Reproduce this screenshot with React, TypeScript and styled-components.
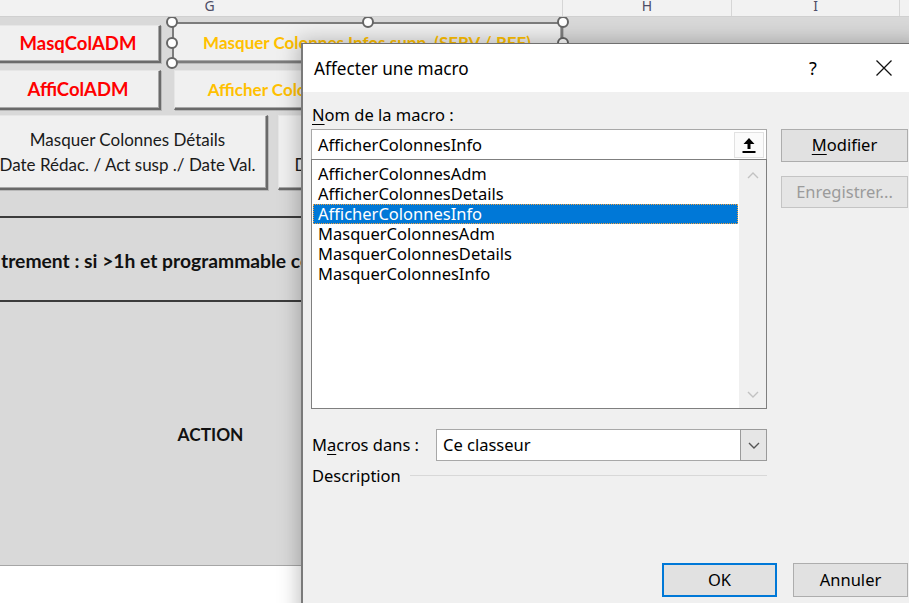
import React from "react";
import styled, { createGlobalStyle } from "styled-components";

const Global = createGlobalStyle`
  html, body { margin: 0; padding: 0; }
  body { width: 909px; height: 603px; overflow: hidden; background: #fff; }
  * { box-sizing: border-box; }
`;

const Screen = styled.div`
  position: relative;
  width: 909px;
  height: 603px;
  overflow: hidden;
  background: #fff;
`;

/* ---------- Spreadsheet ---------- */

const Sheet = styled.div`
  display: flex;
  flex-direction: column;
  width: 909px;
  font-family: Lato, "Liberation Sans", sans-serif;
`;

const ColumnHeader = styled.div`
  display: flex;
  height: 17px;
  background: #f2f2f2;
  border-bottom: 1px solid #d0d0d0;
  overflow: hidden;
`;

const ColHead = styled.div<{ $w: number; $shift?: number }>`
  flex: 0 0 ${(p) => p.$w}px;
  border-right: 1px solid #d6d6d6;
  text-align: center;
  padding-right: ${(p) => p.$shift ?? 0}px;
  font-family: "Noto Sans", sans-serif;
  font-size: 14px;
  line-height: 11px;
  color: #4d4d66;
`;

const ButtonArea = styled.div`
  display: flex;
  flex-direction: column;
  height: 201px;
  padding-top: 5px;
  background: #d9d9d9;
  border-bottom: 2px solid #3c3c3c;
  overflow: hidden;
`;

const ButtonRow = styled.div<{ $h: number; $mt?: number }>`
  display: flex;
  align-items: stretch;
  height: ${(p) => p.$h}px;
  margin-top: ${(p) => p.$mt ?? 0}px;
`;

const FormButton = styled.div<{
  $w: number;
  $ml?: number;
  $mt?: number;
  $color?: string;
  $bold?: boolean;
  $size?: number;
}>`
  flex: 0 0 ${(p) => p.$w}px;
  margin-left: ${(p) => p.$ml ?? 0}px;
  margin-top: ${(p) => p.$mt ?? 0}px;
  display: flex;
  align-items: center;
  justify-content: center;
  text-align: center;
  white-space: nowrap;
  background: #f0f0f0;
  border-top: 1px solid #e6e6e6;
  border-left: 1px solid #e6e6e6;
  border-right: 2px solid #6a6a6a;
  border-bottom: 2px solid #6a6a6a;
  box-shadow: inset -1px -1px 0 #a8a8a8, 1px 1px 0 #b8b8b8;
  color: ${(p) => p.$color ?? "#1a1a1a"};
  font-weight: ${(p) => (p.$bold ? 700 : 400)};
  font-size: ${(p) => p.$size ?? 17}px;
  line-height: 25px;
`;

const Selection = styled.div<{ $w: number; $ml: number }>`
  position: relative;
  flex: 0 0 ${(p) => p.$w}px;
  margin-left: ${(p) => p.$ml}px;
  display: flex;
`;

const SelectionFrame = styled.div`
  position: absolute;
  inset: 0;
  border: 2px solid #7c7c7c;
  pointer-events: none;
`;

const Handle = styled.span<{ $x: string; $y: string }>`
  position: absolute;
  left: ${(p) => p.$x};
  top: ${(p) => p.$y};
  width: 12px;
  height: 12px;
  margin: -6px 0 0 -6px;
  border-radius: 50%;
  background: #fff;
  border: 2px solid #666;
`;

const TextRow = styled.div`
  height: 84px;
  background: #d9d9d9;
  border-bottom: 2px solid #3c3c3c;
  display: flex;
  align-items: center;
  padding-left: 1px;
  padding-top: 3px;
  white-space: nowrap;
  overflow: hidden;
  font-weight: 700;
  font-size: 19.3px;
  color: #111;
`;

const ActionRow = styled.div`
  height: 264px;
  background: #d9d9d9;
  border-bottom: 1px solid #a6a6a6;
  display: flex;
  align-items: center;
`;

const ActionCell = styled.div`
  flex: 0 0 421px;
  text-align: center;
  padding-top: 2px;
  font-weight: 700;
  font-size: 17.3px;
  color: #111;
`;

/* ---------- Dialog ---------- */

const Dialog = styled.div`
  position: absolute;
  left: 301px;
  top: 43px;
  width: 620px;
  height: 600px;
  background: #f0f0f0;
  border: 1px solid #707070;
  border-left: 2px solid #7a7a7a;
  box-shadow: 0 0 20px 2px rgba(0, 0, 0, 0.26);
  font-family: "Noto Sans", "Open Sans", sans-serif;
  font-size: 16.5px;
  color: #000;
  display: flex;
  flex-direction: column;
`;

const TitleBar = styled.div`
  height: 48px;
  background: #fff;
  display: flex;
  align-items: center;
  padding-left: 11px;
  padding-right: 13px;
`;

const Title = styled.div`
  flex: 1;
  font-size: 17.2px;
  padding-top: 1px;
`;

const TitleBtn = styled.div`
  width: 46px;
  height: 32px;
  display: flex;
  align-items: center;
  justify-content: center;
  font-size: 18px;
  margin-left: 25px;
`;

const HelpBtn = styled(TitleBtn)`
  padding-left: 0;
`;

const Body = styled.div`
  display: flex;
  flex-direction: column;
  padding: 12px 12px 0 8px;
`;

const MainGrid = styled.div`
  display: grid;
  grid-template-columns: 456px 127px;
  column-gap: 14px;
  align-items: start;
`;

const LeftCol = styled.div`
  display: flex;
  flex-direction: column;
`;

const RightCol = styled.div`
  display: flex;
  flex-direction: column;
  padding-top: 25px;
  gap: 14px;
`;

const Label = styled.div`
  height: 22px;
  line-height: 22px;
  padding-left: 1px;
  margin-bottom: 3px;
  white-space: nowrap;
`;

const Key = styled.span`
  text-decoration: underline;
  text-underline-offset: 3px;
`;

const NameInput = styled.div`
  position: relative;
  height: 30px;
  background: #fff;
  border: 1px solid #a8a8a8;
  border-bottom: none;
  display: flex;
  align-items: center;
  padding-left: 6px;
  padding-bottom: 1px;
`;

const UploadBtn = styled.div`
  position: absolute;
  right: 2px;
  top: 2px;
  width: 30px;
  height: 26px;
  background: #fbfbfb;
  border: 1px solid #e2e2e2;
  display: flex;
  align-items: center;
  justify-content: center;
`;

const ListBox = styled.div`
  height: 250px;
  background: #fff;
  border: 1px solid #7f7f7f;
  display: flex;
`;

const ListItems = styled.div`
  flex: 1;
  padding: 4px 1px 0 1px;
  display: flex;
  flex-direction: column;
`;

const ListItem = styled.div<{ $selected?: boolean }>`
  height: 20px;
  line-height: 19px;
  padding-left: 5px;
  white-space: nowrap;
  background: ${(p) => (p.$selected ? "#0078d7" : "transparent")};
  color: ${(p) => (p.$selected ? "#fff" : "#000")};
  outline: ${(p) => (p.$selected ? "1px dotted #f0a040" : "none")};
  outline-offset: -1px;
`;

const ScrollBar = styled.div`
  flex: 0 0 27px;
  background: #f0f0f0;
  display: flex;
  flex-direction: column;
  justify-content: space-between;
  align-items: center;
  padding: 12px 0 10px;
`;

const MacrosRow = styled.div`
  display: flex;
  align-items: center;
  height: 32px;
  margin-top: 20px;
`;

const MacrosLabel = styled.div`
  flex: 0 0 125px;
  padding-left: 1px;
  padding-bottom: 2px;
`;

const Select = styled.div`
  flex: 1;
  height: 32px;
  background: #fff;
  border: 1px solid #a8a8a8;
  display: flex;
  align-items: center;
  padding-left: 6px;
`;

const SelectText = styled.div`
  flex: 1;
  padding-bottom: 2px;
`;

const DropBtn = styled.div`
  flex: 0 0 27px;
  align-self: stretch;
  margin: -1px -1px -1px 0;
  background: #e6e6e6;
  border: 1px solid #9a9a9a;
  display: flex;
  align-items: center;
  justify-content: center;
`;

const DescRow = styled.div`
  display: flex;
  align-items: center;
  height: 20px;
  margin-top: 4px;
  padding-left: 1px;
`;

const DescLine = styled.div`
  flex: 1;
  height: 1px;
  margin-left: 9px;
  background: #d8d8d8;
`;

const DlgButton = styled.div<{ $h: number; $w?: number; $disabled?: boolean; $default?: boolean }>`
  height: ${(p) => p.$h}px;
  width: ${(p) => (p.$w ? `${p.$w}px` : "auto")};
  display: flex;
  align-items: center;
  justify-content: center;
  background: ${(p) => (p.$disabled ? "#e5e5e5" : "#e1e1e1")};
  border: ${(p) =>
    p.$default ? "2px solid #0078d7" : p.$disabled ? "1px solid #c4c4c4" : "1px solid #adadad"};
  color: ${(p) => (p.$disabled ? "#9b9b9b" : "#000")};
  padding-bottom: 2px;
`;

const Footer = styled.div`
  display: flex;
  justify-content: flex-end;
  gap: 16px;
  margin-top: 78px;
`;

const UploadIcon = () => (
  <svg width="16" height="18" viewBox="0 0 16 18">
    <path d="M8 2 L2.5 8 H6.5 V13 H9.5 V8 H13.5 Z" fill="#000" />
    <rect x="1.5" y="15" width="13" height="2" fill="#000" />
  </svg>
);

const Chevron = ({ up, color }: { up?: boolean; color: string }) => (
  <svg width="12" height="7" viewBox="0 0 12 7">
    <path
      d={up ? "M1 6 L6 1 L11 6" : "M1 1 L6 6 L11 1"}
      fill="none"
      stroke={color}
      strokeWidth="1.4"
    />
  </svg>
);

const CloseIcon = () => (
  <svg width="18" height="18" viewBox="0 0 18 18">
    <path d="M1.5 1.5 L16.5 16.5 M16.5 1.5 L1.5 16.5" stroke="#111" strokeWidth="1.3" />
  </svg>
);

const macros = [
  "AfficherColonnesAdm",
  "AfficherColonnesDetails",
  "AfficherColonnesInfo",
  "MasquerColonnesAdm",
  "MasquerColonnesDetails",
  "MasquerColonnesInfo",
];

export default function App() {
  return (
    <Screen>
      <Global />
      <Sheet>
        <ColumnHeader>
          <ColHead $w={563} $shift={143}>G</ColHead>
          <ColHead $w={169}>H</ColHead>
          <ColHead $w={168}>I</ColHead>
          <ColHead $w={60} />
        </ColumnHeader>
        <ButtonArea>
          <ButtonRow $h={41}>
            <FormButton $w={165} $ml={-4} $mt={3} $color="#ff0000" $bold $size={18.5}>
              MasqColADM
            </FormButton>
            <Selection $w={391} $ml={11}>
              <FormButton $w={391} $color="#ffc000" $bold $size={17}>
                Masquer Colonnes Infos supp. (SERV / REF)
              </FormButton>
              <SelectionFrame />
              <Handle $x="0%" $y="0%" />
              <Handle $x="50%" $y="0%" />
              <Handle $x="100%" $y="0%" />
              <Handle $x="0%" $y="50%" />
              <Handle $x="100%" $y="50%" />
              <Handle $x="0%" $y="100%" />
              <Handle $x="50%" $y="100%" />
              <Handle $x="100%" $y="100%" />
            </Selection>
          </ButtonRow>
          <ButtonRow $h={40} $mt={7}>
            <FormButton $w={165} $ml={-4} $color="#ff0000" $bold $size={18.5}>
              AffiColADM
            </FormButton>
            <FormButton $w={390} $ml={13} $color="#ffc000" $bold $size={17}>
              Afficher Colonnes Infos supp. (SERV / REF)
            </FormButton>
          </ButtonRow>
          <ButtonRow $h={75} $mt={5}>
            <FormButton $w={280} $ml={-12}>
              Masquer Colonnes Détails
              <br />
              Date Rédac. / Act susp ./ Date Val.
            </FormButton>
            <FormButton $w={290} $ml={10}>
              Afficher Colonnes Détails
              <br />
              Date Rédac. / Act susp ./ Date Val.
            </FormButton>
          </ButtonRow>
        </ButtonArea>
        <TextRow>trement : si &gt;1h et programmable concerné</TextRow>
        <ActionRow>
          <ActionCell>ACTION</ActionCell>
        </ActionRow>
      </Sheet>

      <Dialog>
        <TitleBar>
          <Title>Affecter une macro</Title>
          <HelpBtn>?</HelpBtn>
          <TitleBtn>
            <CloseIcon />
          </TitleBtn>
        </TitleBar>
        <Body>
          <MainGrid>
            <LeftCol>
              <Label>
                <Key>N</Key>om de la macro :
              </Label>
              <NameInput>
                AfficherColonnesInfo
                <UploadBtn>
                  <UploadIcon />
                </UploadBtn>
              </NameInput>
              <ListBox>
                <ListItems>
                  {macros.map((m, i) => (
                    <ListItem key={m} $selected={i === 2}>
                      {m}
                    </ListItem>
                  ))}
                </ListItems>
                <ScrollBar>
                  <Chevron up color="#c2c2c2" />
                  <Chevron color="#c2c2c2" />
                </ScrollBar>
              </ListBox>
              <MacrosRow>
                <MacrosLabel>
                  M<Key>a</Key>cros dans :
                </MacrosLabel>
                <Select>
                  <SelectText>Ce classeur</SelectText>
                  <DropBtn>
                    <Chevron color="#555" />
                  </DropBtn>
                </Select>
              </MacrosRow>
              <DescRow>
                Description
                <DescLine />
              </DescRow>
            </LeftCol>
            <RightCol>
              <DlgButton $h={33}>
                <span>
                  <Key>M</Key>odifier
                </span>
              </DlgButton>
              <DlgButton $h={32} $disabled>
                Enregistrer...
              </DlgButton>
            </RightCol>
          </MainGrid>
          <Footer>
            <DlgButton $h={34} $w={115} $default>
              OK
            </DlgButton>
            <DlgButton $h={34} $w={115}>
              Annuler
            </DlgButton>
          </Footer>
        </Body>
      </Dialog>
    </Screen>
  );
}
